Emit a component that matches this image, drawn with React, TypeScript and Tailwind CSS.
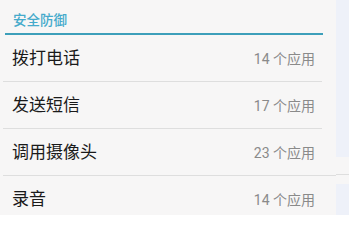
import React from "react";

const rows = [
  { name: "拨打电话", count: "14 个应用" },
  { name: "发送短信", count: "17 个应用" },
  { name: "调用摄像头", count: "23 个应用" },
  { name: "录音", count: "14 个应用" },
];

export default function App() {
  return (
    <div
      className="flex h-[215px] w-[349px] overflow-hidden bg-[#f7f6f6]"
      style={{ fontFamily: "Roboto, 'Noto Sans CJK SC', sans-serif" }}
    >
      <div className="flex w-[336px] shrink-0 flex-col">
        <div className="shrink-0 pl-[13px] pt-[11px] pb-[4px] text-[13.5px] font-medium leading-[18px] text-[#45aacb]">
          安全防御
        </div>
        <div className="ml-[5px] mr-[13px] h-[2px] shrink-0 bg-[#3d9fba]" />
        {rows.map((r, i) => (
          <div key={r.name} className="flex shrink-0 flex-col">
            <div className="flex h-[46px] shrink-0 items-center justify-between pl-[12px] pr-[21px] pt-[2px]">
              <span className="text-[17px] text-[#1a1a1a]">{r.name}</span>
              <span className="text-[14px] text-[#8a8a8a]">{r.count}</span>
            </div>
            {i < rows.length - 1 && (
              <div
                className={
                  i === 2
                    ? "ml-[3px] h-px shrink-0 bg-[#dedede]"
                    : "ml-[3px] mr-[14px] h-px shrink-0 bg-[#dedede]"
                }
              />
            )}
          </div>
        ))}
      </div>
      <div className="flex flex-1 flex-col">
        <div className="h-[157px] shrink-0 bg-[#eef1f9]" />
        <div className="h-[17px] shrink-0" />
        <div className="h-px shrink-0 bg-[#dedede]" />
        <div className="h-[9px] shrink-0" />
        <div className="flex-1 bg-[#eef1f9]" />
      </div>
    </div>
  );
}
